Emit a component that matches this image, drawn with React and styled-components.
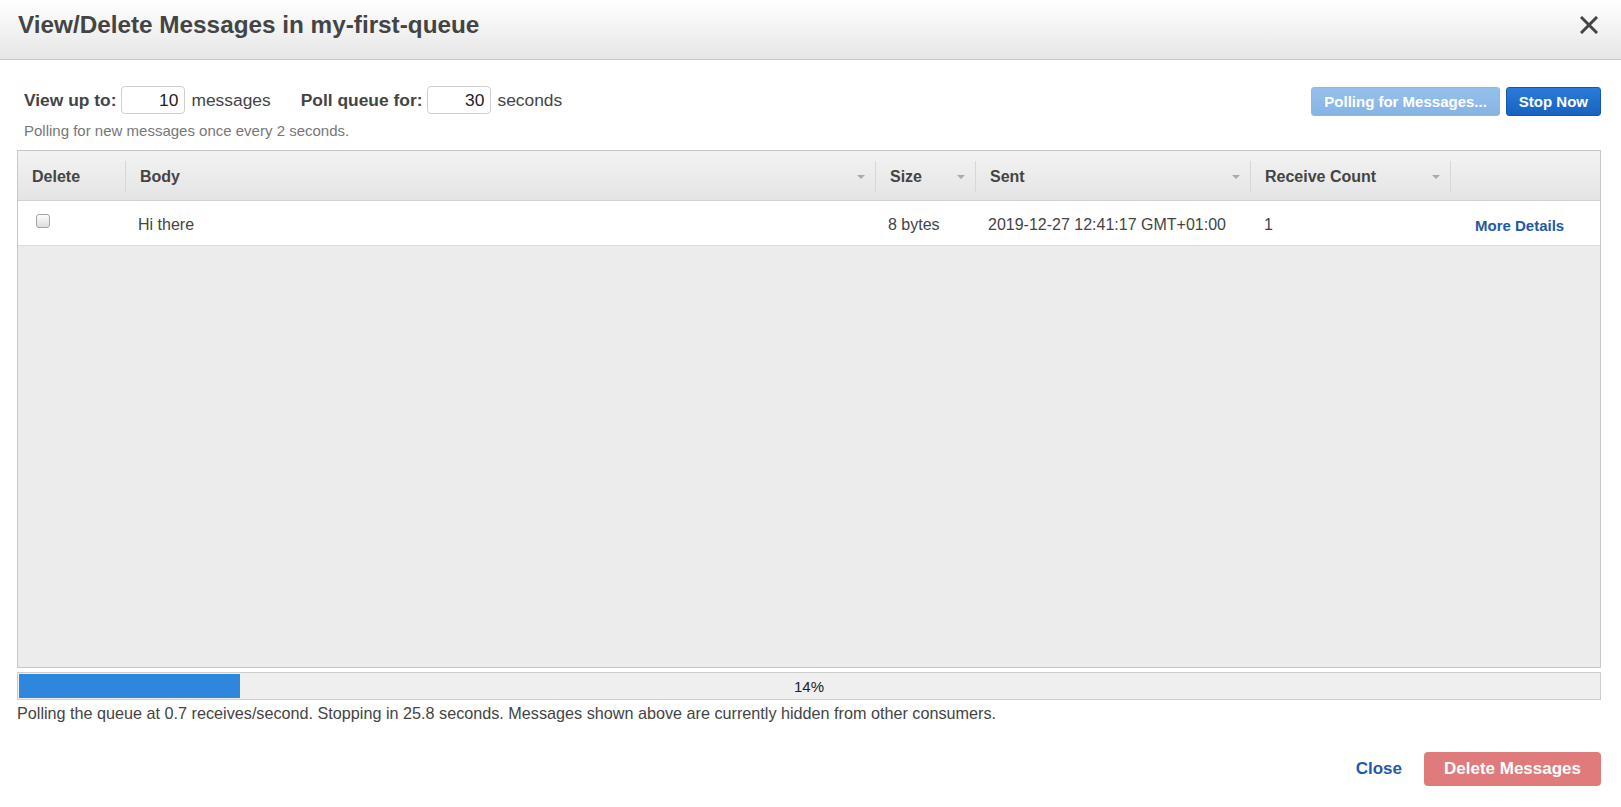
import React from "react";
import styled, { createGlobalStyle } from "styled-components";

const Global = createGlobalStyle`
  html, body { margin: 0; padding: 0; background: #fff; }
  body { font-family: "Liberation Sans", Arial, sans-serif; color: #444; }
  * { box-sizing: border-box; }
`;

const Modal = styled.div`
  width: 1621px;
  min-height: 807px;
  display: flex;
  flex-direction: column;
`;

const Header = styled.header`
  height: 60px;
  padding: 0 23px 10px 18px;
  display: flex;
  align-items: center;
  justify-content: space-between;
  background: linear-gradient(#ffffff, #e6e6e6);
  border-bottom: 1px solid #c9c9c9;
`;

const Title = styled.h1`
  margin: 0;
  font-size: 24.3px;
  font-weight: bold;
  color: #444;
`;

const CloseX = styled.button`
  border: 0;
  background: none;
  padding: 0;
  width: 18px;
  height: 18px;
  display: flex;
  cursor: pointer;
`;

const Body = styled.div`
  padding: 26px 20px 0 17px;
  display: flex;
  flex-direction: column;
`;

const TopRow = styled.div`
  display: flex;
  justify-content: space-between;
  align-items: flex-start;
`;

const Controls = styled.div`
  display: flex;
  flex-direction: column;
  padding-left: 7px;
`;

const ControlLine = styled.div`
  display: flex;
  align-items: center;
  height: 28px;
  font-size: 17.4px;
`;

const Label = styled.span`
  font-weight: bold;
  color: #444;
  margin-left: ${(p) => p.$gap || 0}px;
  margin-right: 5px;
`;

const Unit = styled.span`
  margin-left: 6px;
  color: #444;
`;

const NumInput = styled.input`
  width: 64px;
  height: 28px;
  border: 1px solid #cfcfcf;
  border-radius: 4px;
  text-align: right;
  padding: 0 6px 0 0;
  font: 17.4px "Liberation Sans", Arial, sans-serif;
  color: #222;
  background: #fff;
`;

const Note = styled.div`
  margin-top: 8px;
  font-size: 15px;
  line-height: 18px;
  color: #777;
`;

const Buttons = styled.div`
  display: flex;
  gap: 6px;
  padding-top: 1px;
`;

const Btn = styled.button`
  height: 29px;
  padding: 0 ${(p) => p.$pad || 11}px;
  border-radius: 3px;
  font: bold 15px "Liberation Sans", Arial, sans-serif;
  color: #fff;
  border: 1px solid ${(p) => (p.$disabled ? "#8cb9e6" : "#1558ae")};
  background: ${(p) =>
    p.$disabled
      ? "linear-gradient(#95c0ec, #86b4e3)"
      : "linear-gradient(#2a7cda, #1762c0)"};
  cursor: pointer;
`;

const Table = styled.div`
  margin-top: 10px;
  height: 518px;
  border: 1px solid #c8c8c8;
  background: #ececec;
  display: flex;
  flex-direction: column;
`;

const COLS = "108px 750px 100px 275px 200px 1fr";

const HeadRow = styled.div`
  display: grid;
  grid-template-columns: ${COLS};
  height: 50px;
  background: linear-gradient(#f3f3f3, #e4e4e4);
  border-bottom: 1px solid #d2d2d2;
`;

const HeadCell = styled.div`
  margin: 10px 0 8px;
  display: flex;
  align-items: center;
  justify-content: space-between;
  padding: 0 10px 0 14px;
  font-size: 16px;
  font-weight: bold;
  color: #444;
  border-right: ${(p) => (p.$last ? "0" : "1px solid #d7d7d7")};
`;

const Arrow = styled.span`
  width: 0;
  height: 0;
  border-left: 4px solid transparent;
  border-right: 4px solid transparent;
  border-top: 4px solid #aaa;
`;

const DataRow = styled.div`
  display: grid;
  grid-template-columns: ${COLS};
  height: 45px;
  background: #fff;
  border-bottom: 1px solid #dcdcdc;
`;

const Cell = styled.div`
  display: flex;
  align-items: center;
  padding-left: ${(p) => p.$pl ?? 12}px;
  font-size: 16px;
  color: #444;
  padding-top: ${(p) => p.$pt ?? 3}px;
`;

const Check = styled.input`
  appearance: none;
  margin: 0 0 8px 0;
  width: 14px;
  height: 14px;
  border: 1px solid #a4a4a4;
  border-radius: 3px;
  background: linear-gradient(#fdfdfd, #dcdcdc);
`;

const Link = styled.a`
  font-size: 15px;
  font-weight: bold;
  color: #1f5aa6;
  text-decoration: none;
  cursor: pointer;
`;

const Progress = styled.div`
  position: relative;
  margin-top: 4px;
  height: 28px;
  border: 1px solid #cdcdcd;
  background: #efefef;
  padding: 1px 0 1px 1px;
  display: flex;
`;

const Fill = styled.div`
  background: #2f86dd;
  height: 100%;
`;

const ProgressText = styled.span`
  position: absolute;
  inset: 0;
  display: flex;
  align-items: center;
  justify-content: center;
  font-size: 15px;
  color: #222;
`;

const Status = styled.div`
  margin-top: 4px;
  font-size: 16.2px;
  line-height: 18px;
  color: #444;
`;

const Footer = styled.div`
  margin-top: 30px;
  display: flex;
  justify-content: flex-end;
  align-items: center;
  gap: 22px;
`;

const TextBtn = styled.button`
  border: 0;
  background: none;
  padding: 0;
  font: bold 17px "Liberation Sans", Arial, sans-serif;
  color: #1f5aa6;
  cursor: pointer;
`;

const DangerBtn = styled.button`
  height: 34px;
  padding: 0 20px;
  border: 0;
  border-radius: 4px;
  background: #e07b7b;
  color: #fff;
  font: bold 17px "Liberation Sans", Arial, sans-serif;
  cursor: pointer;
`;

const headers = [
  { label: "Delete", arrow: false },
  { label: "Body", arrow: true },
  { label: "Size", arrow: true },
  { label: "Sent", arrow: true },
  { label: "Receive Count", arrow: true },
  { label: "", arrow: false, last: true },
];

export default function App() {
  const pct = 14;
  return (
    <>
      <Global />
      <Modal>
        <Header>
          <Title>View/Delete Messages in my-first-queue</Title>
          <CloseX aria-label="Close">
            <svg width="18" height="18" viewBox="0 0 18 18">
              <path d="M2 2 L16 16 M16 2 L2 16" stroke="#444" strokeWidth="3" strokeLinecap="square" />
            </svg>
          </CloseX>
        </Header>
        <Body>
          <TopRow>
            <Controls>
              <ControlLine>
                <Label>View up to:</Label>
                <NumInput defaultValue="10" />
                <Unit>messages</Unit>
                <Label $gap={30}>Poll queue for:</Label>
                <NumInput defaultValue="30" />
                <Unit>seconds</Unit>
              </ControlLine>
              <Note>Polling for new messages once every 2 seconds.</Note>
            </Controls>
            <Buttons>
              <Btn $disabled $pad={12}>Polling for Messages...</Btn>
              <Btn $pad={12}>Stop Now</Btn>
            </Buttons>
          </TopRow>
          <Table>
            <HeadRow>
              {headers.map((h, i) => (
                <HeadCell key={i} $last={h.last}>
                  <span>{h.label}</span>
                  {h.arrow && <Arrow />}
                </HeadCell>
              ))}
            </HeadRow>
            <DataRow>
              <Cell $pl={18}>
                <Check type="checkbox" />
              </Cell>
              <Cell>Hi there</Cell>
              <Cell>8 bytes</Cell>
              <Cell>2019-12-27 12:41:17 GMT+01:00</Cell>
              <Cell $pl={13}>1</Cell>
              <Cell $pl={24} $pt={5}>
                <Link>More Details</Link>
              </Cell>
            </DataRow>
          </Table>
          <Progress>
            <Fill style={{ width: `${pct}%` }} />
            <ProgressText>{pct}%</ProgressText>
          </Progress>
          <Status>
            Polling the queue at 0.7 receives/second. Stopping in 25.8 seconds. Messages shown above are currently hidden from other consumers.
          </Status>
          <Footer>
            <TextBtn>Close</TextBtn>
            <DangerBtn>Delete Messages</DangerBtn>
          </Footer>
        </Body>
      </Modal>
    </>
  );
}
